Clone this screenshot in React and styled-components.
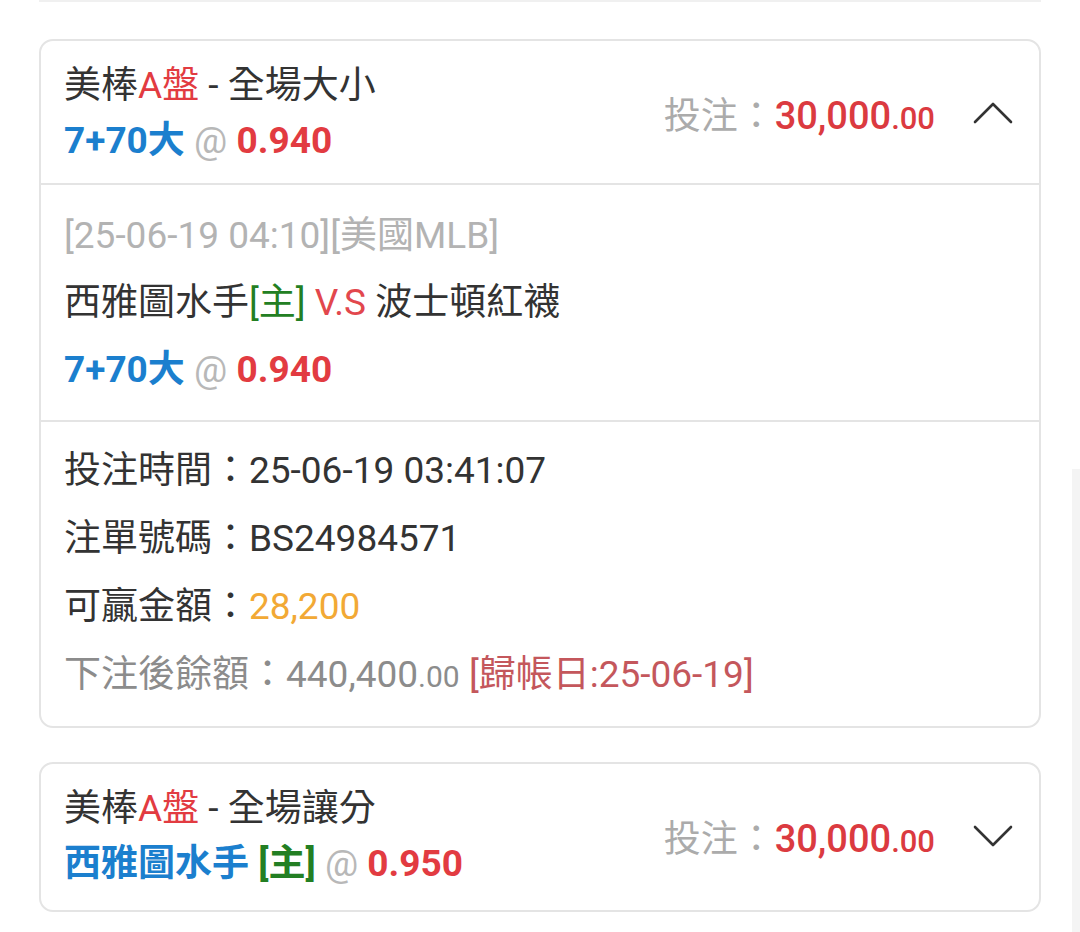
import React from 'react';
import styled, { createGlobalStyle } from 'styled-components';

const GlobalStyle = createGlobalStyle`
  body {
    margin: 0;
    background: #fff;
    font-family: "Roboto", "Noto Sans CJK TC", sans-serif;
    color: #333;
  }
`;

const Page = styled.div`
  padding: 0 39px 20px;
`;

const PrevEdge = styled.div`
  height: 2px;
  background: #f0f0f0;
  margin-bottom: 37px;
`;

const List = styled.div`
  display: flex;
  flex-direction: column;
  gap: 34px;
`;

const Card = styled.div`
  border: 2px solid #e4e4e4;
  border-radius: 14px;
  overflow: hidden;
`;

const Header = styled.div`
  display: flex;
  align-items: center;
  justify-content: space-between;
  padding: 17px 26px ${({ $bottom }) => $bottom || '15px'} 23px;
`;

const Line = styled.div`
  font-size: 37px;
  line-height: 55px;
  white-space: nowrap;
  color: ${({ $color }) => $color || '#333'};
  font-weight: ${({ $bold }) => ($bold ? 700 : 400)};
`;

const Tone = styled.span`
  color: ${({ $c }) => $c};
  font-weight: ${({ $bold }) => ($bold ? 700 : 'inherit')};
`;

const At = styled.span`
  color: #b8b8b8;
  font-weight: 400;
`;

const Stake = styled.div`
  display: flex;
  align-items: center;
  gap: 38px;
`;

const StakeText = styled.div`
  font-size: 37px;
  color: #ababab;
  white-space: nowrap;
`;

const Amount = styled.span`
  color: #db3a40;
  font-size: 38px;
  font-weight: 500;
`;

const Cents = styled.span`
  font-size: ${({ $size }) => $size || '31px'};
`;

const Section = styled.div`
  border-top: 2px solid #e4e4e4;
  padding: ${({ $pad }) => $pad} 23px;
`;

const Row = styled.div`
  font-size: 37px;
  line-height: ${({ $lh }) => $lh};
  white-space: nowrap;
  color: ${({ $color }) => $color || '#333'};
  font-weight: ${({ $bold }) => ($bold ? 700 : 400)};
`;

const ScrollTrack = styled.div`
  position: fixed;
  right: 0;
  top: 469px;
  bottom: 0;
  width: 8px;
  background: #f4f4f4;
`;

const BLUE = '#1b7fce';
const RED = '#e23b41';
const GREEN = '#237f23';

const Chevron = ({ up }) => (
  <svg width="40" height="22" viewBox="0 0 40 22" fill="none">
    <polyline
      points={up ? '2,20 20,2 38,20' : '2,2 20,20 38,2'}
      stroke="#333"
      strokeWidth="2.6"
      strokeLinecap="round"
      strokeLinejoin="round"
    />
  </svg>
);

const Odds = ({ pick, odds }) => (
  <>
    <Tone $c={BLUE} $bold>{pick}</Tone> <At>@</At> <Tone $c={RED} $bold>{odds}</Tone>
  </>
);

const CardHeader = ({ market, children, up, bottom }) => (
  <Header $bottom={bottom}>
    <div>
      <Line>
        美棒<Tone $c={RED}>A盤</Tone> - {market}
      </Line>
      <Line $bold>{children}</Line>
    </div>
    <Stake>
      <StakeText>
        投注：<Amount>30,000<Cents>.00</Cents></Amount>
      </StakeText>
      <Chevron up={up} />
    </Stake>
  </Header>
);

export default function App() {
  return (
    <>
      <GlobalStyle />
      <Page>
        <PrevEdge />
        <List>
          <Card>
            <CardHeader market="全場大小" up>
              <Odds pick="7+70大" odds="0.940" />
            </CardHeader>
            <Section $pad="17px">
              <Row $lh="67px" $color="#b3b3b3">[25-06-19 04:10][美國MLB]</Row>
              <Row $lh="67px">
                西雅圖水手<Tone $c={GREEN}>[主]</Tone> <Tone $c="#e2474d">V.S</Tone> 波士頓紅襪
              </Row>
              <Row $lh="67px" $bold>
                <Odds pick="7+70大" odds="0.940" />
              </Row>
            </Section>
            <Section $pad="15px">
              <Row $lh="68px">投注時間：25-06-19 03:41:07</Row>
              <Row $lh="68px">注單號碼：BS24984571</Row>
              <Row $lh="68px">
                可贏金額：<Tone $c="#f2a935">28,200</Tone>
              </Row>
              <Row $lh="68px" $color="#8c8c8c">
                下注後餘額：440,400<Cents $size="30px">.00</Cents>{' '}
                <Tone $c="#c4575c">[歸帳日:25-06-19]</Tone>
              </Row>
            </Section>
          </Card>
          <Card>
            <CardHeader market="全場讓分" bottom="19px">
              <Tone $c={BLUE}>西雅圖水手</Tone> <Tone $c={GREEN}>[主]</Tone> <At>@</At>{' '}
              <Tone $c={RED}>0.950</Tone>
            </CardHeader>
          </Card>
        </List>
      </Page>
      <ScrollTrack />
    </>
  );
}
